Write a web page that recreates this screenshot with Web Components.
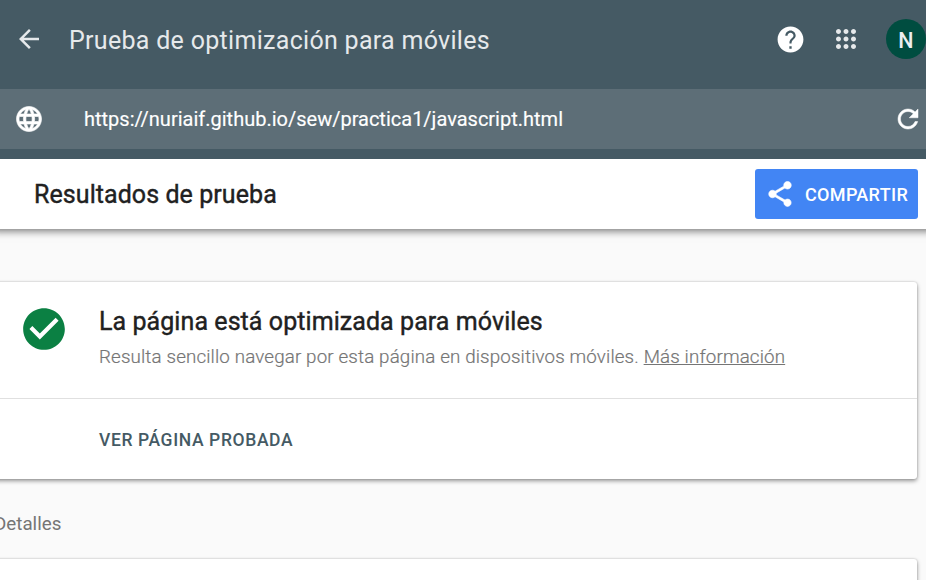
<!DOCTYPE html>
<html lang="es">
<head>
<meta charset="utf-8">
<title>Prueba de optimización para móviles</title>
<style>
body{margin:0;background:#fafafa;font-family:Roboto,"Liberation Sans",sans-serif;color:#212121;overflow:hidden;height:580px}
</style>
</head>
<body>
<mobile-test-page></mobile-test-page>
<script>
const ICONS={
back:'M20 11H7.83l5.59-5.59L12 4l-8 8 8 8 1.41-1.41L7.83 13H20v-2z',
globe:'M11.99 2C6.47 2 2 6.48 2 12s4.47 10 9.99 10C17.52 22 22 17.52 22 12S17.52 2 11.99 2zm6.93 6h-2.95c-.32-1.25-.78-2.45-1.38-3.56 1.84.63 3.37 1.91 4.33 3.56zM12 4.04c.83 1.2 1.48 2.53 1.91 3.96h-3.82c.43-1.43 1.08-2.76 1.91-3.96zM4.26 14C4.1 13.36 4 12.69 4 12s.1-1.36.26-2h3.38c-.08.66-.14 1.32-.14 2s.06 1.34.14 2H4.26zm.82 2h2.95c.32 1.25.78 2.45 1.38 3.56-1.84-.63-3.37-1.9-4.33-3.56zm2.95-8H5.08c.96-1.66 2.49-2.93 4.33-3.56C8.81 5.55 8.35 6.75 8.03 8zM12 19.96c-.83-1.2-1.48-2.53-1.91-3.96h3.82c-.43 1.43-1.08 2.76-1.91 3.96zM14.34 14H9.66c-.09-.66-.16-1.32-.16-2s.07-1.35.16-2h4.68c.09.65.16 1.32.16 2s-.07 1.34-.16 2zm.25 5.56c.6-1.11 1.06-2.31 1.38-3.56h2.95c-.96 1.65-2.49 2.93-4.33 3.56zM16.36 14c.08-.66.14-1.32.14-2s-.06-1.34-.14-2h3.38c.16.64.26 1.31.26 2s-.1 1.36-.26 2h-3.38z',
help:'M12 2C6.48 2 2 6.48 2 12s4.48 10 10 10 10-4.48 10-10S17.52 2 12 2zm.9 17.2h-1.8v-1.9h1.8v1.9zm2.07-7.95l-.9.92C13.25 12.9 12.8 13.5 12.8 15h-1.6v-.5c0-1.1.45-2.1 1.17-2.83l1.24-1.26c.37-.36.69-.86.69-1.41 0-1.25-1-2.3-2.3-2.3S9.7 7.75 9.7 9H8c0-2.21 1.79-4 4-4s4 1.79 4 4c0 .88-.46 1.58-1.03 2.25z',
apps:'M6 8c1.1 0 2-.9 2-2s-.9-2-2-2-2 .9-2 2 .9 2 2 2zm6 12c1.1 0 2-.9 2-2s-.9-2-2-2-2 .9-2 2 .9 2 2 2zm-6 0c1.1 0 2-.9 2-2s-.9-2-2-2-2 .9-2 2 .9 2 2 2zm0-6c1.1 0 2-.9 2-2s-.9-2-2-2-2 .9-2 2 .9 2 2 2zm6 0c1.1 0 2-.9 2-2s-.9-2-2-2-2 .9-2 2 .9 2 2 2zm4-8c0 1.1.9 2 2 2s2-.9 2-2-.9-2-2-2-2 .9-2 2zm-4 2c1.1 0 2-.9 2-2s-.9-2-2-2-2 .9-2 2 .9 2 2 2zm6 6c1.1 0 2-.9 2-2s-.9-2-2-2-2 .9-2 2 .9 2 2 2zm0 6c1.1 0 2-.9 2-2s-.9-2-2-2-2 .9-2 2 .9 2 2 2z',
refresh:'M17.65 6.35C16.2 4.9 14.21 4 12 4c-4.42 0-7.99 3.58-7.99 8s3.57 8 7.99 8c3.73 0 6.84-2.55 7.73-6h-2.08c-.82 2.33-3.04 4-5.65 4-3.31 0-6-2.69-6-6s2.69-6 6-6c1.66 0 3.14.69 4.22 1.78L13 11h7V4l-2.35 2.35z',
share:'M18 16.08c-.76 0-1.44.3-1.96.77L8.91 12.7c.05-.23.09-.46.09-.7s-.04-.47-.09-.7l7.05-4.11c.54.5 1.25.81 2.04.81 1.66 0 3-1.34 3-3s-1.34-3-3-3-3 1.34-3 3c0 .24.04.47.09.7L8.04 9.81C7.5 9.31 6.79 9 6 9c-1.66 0-3 1.34-3 3s1.34 3 3 3c.79 0 1.5-.31 2.04-.81l7.12 4.16c-.05.21-.08.43-.08.65 0 1.61 1.31 2.92 2.92 2.92s2.92-1.31 2.92-2.92-1.31-2.92-2.92-2.92z',
check:'M12 2C6.48 2 2 6.48 2 12s4.48 10 10 10 10-4.48 10-10S17.52 2 12 2zm-2 15l-5-5 1.41-1.41L10 14.17l7.59-7.59L19 8l-9 9z'
};
function define(name,html){
  customElements.define(name,class extends HTMLElement{
    constructor(){
      super();
      const t=document.createElement('template');
      t.innerHTML=html;
      this.attachShadow({mode:'open'}).append(t.content.cloneNode(true));
    }
  });
}
customElements.define('md-icon',class extends HTMLElement{
  connectedCallback(){
    const s=this.getAttribute('size')||30;
    const w=this.getAttribute('stroke')||0;
    if(!this.shadowRoot)this.attachShadow({mode:'open'});
    this.shadowRoot.innerHTML=`<style>:host{display:block;flex:none;width:${s}px;height:${s}px}svg{display:block}</style><svg width="${s}" height="${s}" viewBox="0 0 24 24" fill="currentColor" stroke="currentColor" stroke-width="${w}"><path d="${ICONS[this.getAttribute('name')]}"/></svg>`;
  }
});
define('user-avatar',`<style>:host{display:flex;flex:none;box-sizing:border-box;width:40px;height:40px;border-radius:50%;background:#004d40;color:#eceff0;align-items:center;justify-content:center;font-size:21.5px;font-weight:500;line-height:24px;padding-top:3px}</style><slot></slot>`);
define('app-header',`<style>
:host{display:flex;align-items:center;height:78px;padding:0 0 11px 14px;background:#455a64;color:#e6e9eb}
h1{margin:3px 0 0 25px;font-size:25px;font-weight:400;line-height:30px;letter-spacing:.3px;flex:1;white-space:nowrap}
.actions{display:flex;align-items:center}
md-icon+md-icon{margin:0 25px 0 25px}.help{color:#fff}
</style><md-icon name="back"></md-icon><h1><slot></slot></h1><div class="actions"><md-icon class="help" name="help" size="31"></md-icon><md-icon name="apps"></md-icon><slot name="user"></slot></div>`);
define('url-bar',`<style>
:host{display:flex;align-items:center;position:relative;z-index:1;box-sizing:border-box;height:70px;padding:0 3px 0 14px;background:#5d6e77;border-bottom:10px solid #455a64;color:#fff}
span{flex:1;margin-left:40px;font-size:20px;line-height:24px;-webkit-text-stroke:.15px;white-space:nowrap}
</style><md-icon name="globe" stroke=".5"></md-icon><span><slot></slot></span><md-icon name="refresh" stroke=".4"></md-icon>`);
define('share-button',`<style>
:host{display:flex;align-items:center;box-sizing:border-box;width:163px;height:50px;padding-left:10px;border-radius:3px;background:#4285f4;color:#fff;font-size:18px;font-weight:500;letter-spacing:.33px;white-space:nowrap}
span{margin:2px 0 0 10px;line-height:20px}
</style><md-icon name="share" stroke=".5"></md-icon><span><slot></slot></span>`);
define('result-bar',`<style>
:host{display:flex;align-items:center;justify-content:space-between;position:relative;height:70px;margin:0 -8px;padding:0 16px 0 42px;background:#fff;box-shadow:0 2px 8px rgba(0,0,0,.55)}
h2{margin:2px 0 0;font-size:25px;font-weight:400;line-height:30px;letter-spacing:.07px;-webkit-text-stroke:.4px;white-space:nowrap}
</style><h2><slot></slot></h2><slot name="action"></slot>`);
define('material-card',`<style>
:host{display:block;margin-left:-20px;width:937px;background:#fff;border-radius:3px;box-shadow:0 2px 4px rgba(0,0,0,.4),0 0 2px rgba(0,0,0,.2)}
</style><slot></slot>`);
define('result-summary',`<style>
:host{display:flex;box-sizing:border-box;height:117px;padding:22px 0 0 39px;border-bottom:1px solid #e0e0e0}
.text{margin-left:30px;white-space:nowrap}
md-icon{color:#0b8043}
h3{margin:3px 0 0;font-size:25px;font-weight:400;line-height:30px;letter-spacing:.07px;-webkit-text-stroke:.4px}
p{margin:8px 0 0;font-size:18.75px;font-weight:300;line-height:24px;letter-spacing:.15px;-webkit-text-stroke:.2px;color:#757575}
</style><md-icon name="check" size="50"></md-icon><div class="text"><h3><slot name="title"></slot></h3><p><slot></slot></p></div>`);
define('card-action',`<style>
:host{display:flex;align-items:center;height:80px;padding:1px 0 0 119px;box-sizing:border-box;color:#455a64;font-size:17.5px;font-weight:500;letter-spacing:.62px;white-space:nowrap}
</style><slot></slot>`);
define('section-label',`<style>
:host{display:flex;align-items:center;box-sizing:border-box;height:80px;padding-top:9px;margin-left:-6px;font-size:18.75px;color:#757575}
</style><slot></slot>`);
define('mobile-test-page',`<style>
:host{display:block;height:580px;overflow:hidden}
main{padding-top:53px}a{color:inherit;text-decoration:underline}
.more{height:80px}
</style>
<app-header>Prueba de optimización para móviles<user-avatar slot="user">N</user-avatar></app-header>
<url-bar>https://nuriaif.github.io/sew/practica1/javascript.html</url-bar>
<result-bar>Resultados de prueba<share-button slot="action">COMPARTIR</share-button></result-bar>
<main>
<material-card><result-summary><span slot="title">La página está optimizada para móviles</span>Resulta sencillo navegar por esta página en dispositivos móviles. <a>Más información</a></result-summary><card-action>VER PÁGINA PROBADA</card-action></material-card>
<section-label>Detalles</section-label>
<material-card class="more"></material-card>
</main>`);
</script>
</body>
</html>
